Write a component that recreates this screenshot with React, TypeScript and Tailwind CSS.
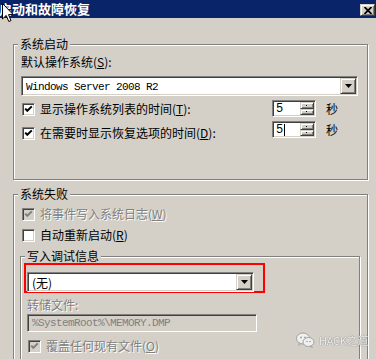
import React from 'react';

const sunken =
  'border border-t-[#808080] border-l-[#808080] border-b-white border-r-white shadow-[inset_1px_1px_0_#404040,inset_-1px_-1px_0_#d4d0c8]';
const raised =
  'border border-t-[#d4d0c8] border-l-[#d4d0c8] border-b-[#404040] border-r-[#404040] shadow-[inset_1px_1px_0_#fff,inset_-1px_-1px_0_#808080]';
const etched = 'border border-[#808080] shadow-[inset_1px_1px_0_#fff,1px_1px_0_#fff]';
const dim = 'text-[#808080] [text-shadow:1px_1px_0_#fff]';
const mono = "font-['Liberation_Mono',monospace] text-[11px] tracking-[-0.6px]";

const CheckBox: React.FC<{ checked?: boolean; disabled?: boolean }> = ({ checked, disabled }) => (
  <div
    className={`w-[13px] h-[13px] shrink-0 flex items-center justify-center ${sunken} ${
      disabled ? 'bg-[#d4d0c8]' : 'bg-white'
    }`}
  >
    {checked && (
      <svg width="9" height="9" viewBox="0 0 9 9">
        <path
          d="M1.2 3.6 L3.3 5.8 L7.8 1.4"
          fill="none"
          stroke={disabled ? '#808080' : '#000'}
          strokeWidth="2"
        />
      </svg>
    )}
  </div>
);

const CheckRow: React.FC<{
  checked?: boolean;
  disabled?: boolean;
  className?: string;
  children: React.ReactNode;
}> = ({ checked, disabled, className = '', children }) => (
  <div className={`flex items-center gap-[5px] h-[14px] ${className}`}>
    <CheckBox checked={checked} disabled={disabled} />
    <span className={`whitespace-nowrap ${disabled ? dim : ''}`}>{children}</span>
  </div>
);

const ArrowDown = () => (
  <svg width="7" height="4" viewBox="0 0 7 4">
    <path d="M0 0 H7 L3.5 4 Z" fill="#000" />
  </svg>
);

const Combo: React.FC<{ text: string; className?: string }> = ({ text, className = '' }) => (
  <div className={`h-[20px] p-[1px] bg-white flex items-stretch ${sunken} ${className}`}>
    <div className="flex-1 flex items-center pl-[3px] pt-[1px]">{text}</div>
    <div className={`w-[16px] bg-[#d4d0c8] flex items-center justify-center ${raised}`}>
      <ArrowDown />
    </div>
  </div>
);

const SpinBtn = () => (
  <div className={`flex-1 bg-[#d4d0c8] flex items-center justify-center ${raised}`}>
    <div className="w-[1px] h-[1px] bg-black" />
  </div>
);

const Spinner: React.FC<{ value: string; caret?: boolean }> = ({ value, caret }) => (
  <div className={`w-[44px] h-[17px] p-[1px] bg-white flex ${sunken}`}>
    <div className={`flex-1 flex items-center pl-[2px] ${mono} text-[12px]`}>
      {value}
      {caret && <span className="w-[1px] h-[12px] bg-black ml-[1px]" />}
    </div>
    <div className="w-[14px] flex flex-col">
      <SpinBtn />
      <SpinBtn />
    </div>
  </div>
);

const Legend: React.FC<{ children: React.ReactNode }> = ({ children }) => (
  <div className="-mt-[8px] ml-[4px] px-[2px] w-fit h-[14px] leading-[14px] bg-[#d4d0c8]">{children}</div>
);

export default function App() {
  return (
    <div className="relative w-[376px] h-[359px] overflow-hidden bg-[#d4d0c8] text-black text-[12px] leading-[14px] font-['Noto_Sans_CJK_SC','Noto_Sans',sans-serif]">
      {/* title bar */}
      <div className="h-[18px] bg-[#0a246a] flex items-center justify-between">
        <span className="text-white font-bold text-[13px] -ml-[1px]">启动和故障恢复</span>
        <div className={`w-[15px] h-[12px] mr-[1px] mt-[2px] bg-[#d4d0c8] flex items-center justify-center ${raised}`}>
          <svg width="8" height="7" viewBox="0 0 8 7">
            <path d="M0.5 0 L7.5 7 M7.5 0 L0.5 7" stroke="#000" strokeWidth="1.8" />
          </svg>
        </div>
      </div>

      {/* 系统启动 */}
      <div className={`mt-[26px] ml-[13px] w-[355px] h-[136px] ${etched}`}>
        <Legend>系统启动</Legend>
        <div className="mt-[4px] ml-[7px]">
          默认操作系统(<u>S</u>):
        </div>
        <Combo text="Windows Server 2008 R2" className={`mt-[7px] ml-[7px] w-[337px] ${mono}`} />
        <div className="mt-[4px] h-[17px] flex items-start pr-[29px]">
          <CheckRow checked className="flex-1 ml-[8px] mt-[2px]">
            显示操作系统列表的时间(<u>T</u>):
          </CheckRow>
          <Spinner value="5" />
          <span className="ml-[10px] leading-[17px]">秒</span>
        </div>
        <div className="mt-[4px] h-[17px] flex items-start pr-[29px]">
          <CheckRow checked className="flex-1 ml-[8px] mt-[5px]">
            在需要时显示恢复选项的时间(<u>D</u>):
          </CheckRow>
          <Spinner value="5" caret />
          <span className="ml-[10px] leading-[17px]">秒</span>
        </div>
      </div>

      {/* 系统失败 */}
      <div className={`mt-[14px] ml-[13px] w-[355px] h-[200px] ${etched}`}>
        <Legend>系统失败</Legend>
        <CheckRow checked disabled className="mt-[6px] ml-[8px]">
          将事件写入系统日志(<u>W</u>)
        </CheckRow>
        <CheckRow className="mt-[7px] ml-[8px]">
          自动重新启动(<u>R</u>)
        </CheckRow>

        {/* 写入调试信息 */}
        <div className={`mt-[14px] ml-[6px] w-[340px] h-[150px] ${etched}`}>
          <Legend>写入调试信息</Legend>
          <div className="ml-[3px] w-[241px] h-[30px] border-2 border-[#ff0000]">
            <Combo text="(无)" className="mt-[7px] ml-[1px] w-[227px]" />
          </div>
          <div className={`mt-[5px] ml-[6px] ${dim}`}>转储文件:</div>
          <div className={`mt-[2px] ml-[6px] w-[230px] h-[18px] p-[1px] flex items-center pl-[4px] bg-[#d4d0c8] text-[#808080] ${sunken} ${mono}`}>
            %SystemRoot%\MEMORY.DMP
          </div>
          <CheckRow checked disabled className="mt-[7px] ml-[7px]">
            覆盖任何现有文件(<u>O</u>)
          </CheckRow>
        </div>
      </div>

      {/* watermark */}
      <div className="absolute left-[296px] top-[332px] flex items-center gap-[4px] whitespace-nowrap opacity-90">
        <svg width="19" height="16" viewBox="0 0 19 16">
          <ellipse cx="7" cy="6.5" rx="6.5" ry="5.5" fill="#f4f4f4" stroke="#9a9a9a" strokeWidth="1" />
          <path d="M3 11 L2.5 13.5 L5.5 11.5 Z" fill="#f4f4f4" stroke="#9a9a9a" strokeWidth="0.8" />
          <circle cx="5" cy="5.5" r="0.9" fill="#9a9a9a" />
          <circle cx="9" cy="5.5" r="0.9" fill="#9a9a9a" />
          <ellipse cx="12.5" cy="10" rx="5.5" ry="4.5" fill="#f4f4f4" stroke="#9a9a9a" strokeWidth="1" />
          <path d="M15.5 14 L16.5 15.8 L13.8 14.3 Z" fill="#f4f4f4" stroke="#9a9a9a" strokeWidth="0.8" />
          <circle cx="11" cy="9.5" r="0.8" fill="#9a9a9a" />
          <circle cx="14" cy="9.5" r="0.8" fill="#9a9a9a" />
        </svg>
        <span className="text-[11px] tracking-[-0.3px] text-[#f6f6f6] [text-shadow:0_0_1px_#707070,0_0_1px_#707070] font-['Noto_Sans_CJK_SC',sans-serif]">
          HACK之道
        </span>
      </div>

      {/* mouse cursor */}
      <svg className="absolute left-[2px] top-[3px]" width="12" height="20" viewBox="0 0 12 20">
        <path d="M0.5 0.5 L0.5 16 L4.2 12.4 L6.8 18.5 L9 17.6 L6.5 11.6 L11.2 11.6 Z" fill="#fff" stroke="#000" strokeWidth="1" />
      </svg>
    </div>
  );
}
